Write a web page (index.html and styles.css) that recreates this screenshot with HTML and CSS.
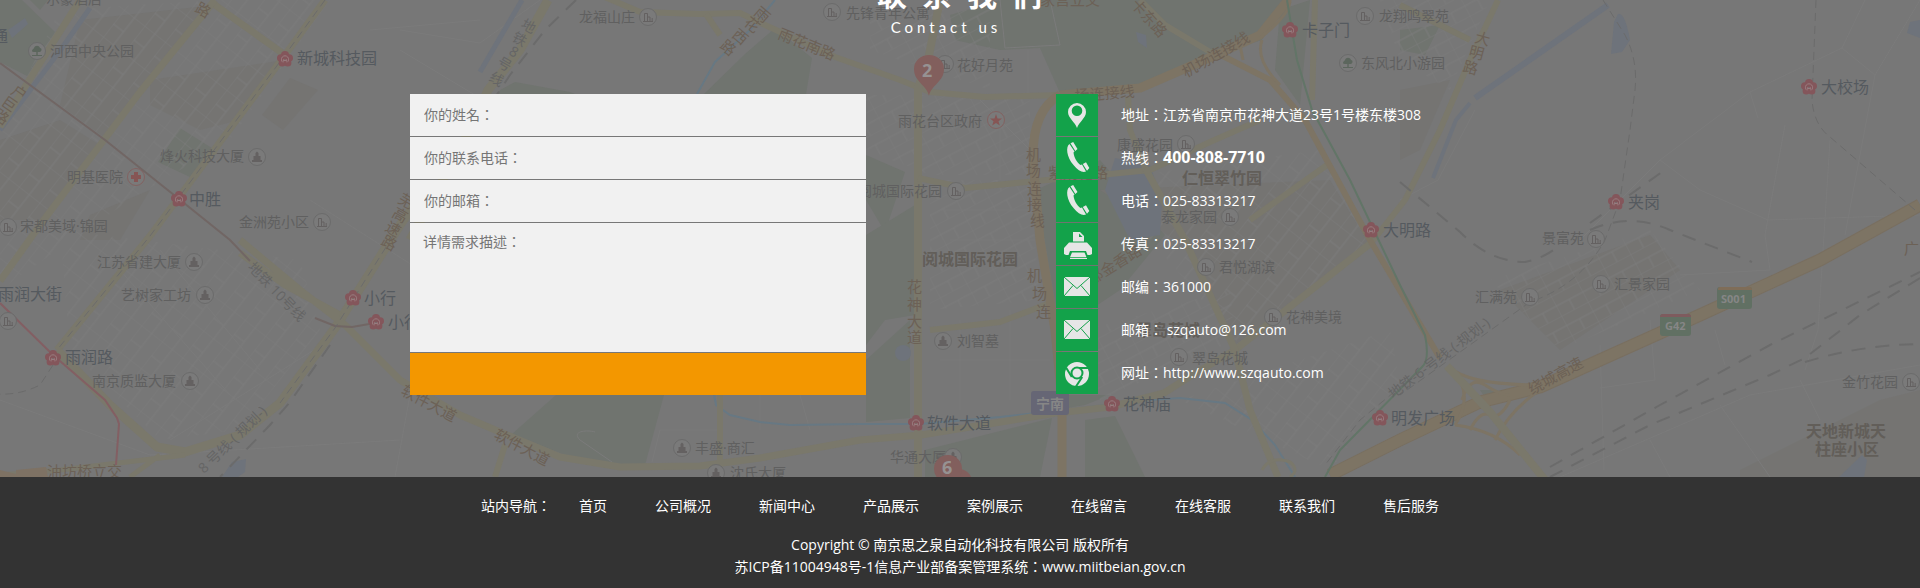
FILE: index.html
```html
<!DOCTYPE html>
<html lang="zh-CN">
<head>
<meta charset="utf-8">
<meta name="viewport" content="width=device-width, initial-scale=1">
<title>联系我们</title>
<link rel="stylesheet" href="styles.css">
</head>
<body>
<section class="contact">
<svg class="map" viewBox="0 0 1920 477" preserveAspectRatio="xMidYMid slice" aria-hidden="true">
  <defs>
    <pattern id="blocks" width="34" height="26" patternUnits="userSpaceOnUse" patternTransform="rotate(-52)">
      <path class="lane" d="M0 0H34M0 0V26M17 0V13M0 13H34"/>
    </pattern>
    <pattern id="blocks-flat" width="30" height="22" patternUnits="userSpaceOnUse" patternTransform="rotate(-28)">
      <path class="lane" d="M0 0H30M0 0V22M15 11V22M0 11H30"/>
    </pattern>
    <g id="metro">
      <g class="metro-petal"><circle cy="-4" r="4"/><circle cx="4.2" cy="-1" r="3.8"/><circle cx="2.8" cy="4" r="3.6"/><circle cx="-2.8" cy="4" r="3.6"/><circle cx="-4.2" cy="-1" r="3.8"/></g>
      <path class="metro-ring" d="M-2 3.4A3.6 3.6 0 1 1 2 3.4M-1.4 2.6V.6L0 2L1.4 .6V2.6"/>
    </g>
    <g id="poi"><circle class="poi-disc" r="8.5"/><path class="poi-mark" d="M-3.500 4V-3.500H-.5V4M-.5 0H2V4M4.200 1V4M-5 4.500H5"/></g>
    <g id="tower"><circle class="poi-disc" r="8.5"/><path class="poi-fill" d="M-5 5V3H-3.500V-1H-1.500V-4L0-5.500L1.500-4V-1H3.500V3H5V5Z"/></g>
    <g id="tree"><circle class="poi-disc" r="8.5"/><path class="poi-tree" d="M-5 0C-5-2-3-2-3-3C-2-6 2-6 3-3C5-3 5 0 3 1H.7V4H5V5H-5V4H-.7V1H-3C-5 1-5 0-5 0Z"/></g>
  </defs>

  <g class="park">
    <path d="M0 0H22L55 32L27 76L0 62Z"/><path d="M30 0H48L40 10Z"/>
    <path d="M180 128L215 150L192 178L158 162Z"/>
    <path d="M500 90L515 82L570 92L590 100H495Z"/>
    <path d="M745 54L775 28L812 58L806 94H704Z"/>
    <path d="M950 15L1000 0H1285L1262 40L1200 60L1140 84L1060 93L1040 48L1000 50L955 40Z"/>
    <path d="M1280 10L1310 0L1300 105L1275 70Z"/>
    <path d="M866 155L905 172L885 232L866 200Z"/>
    <path d="M866 235L915 205V315L885 320L866 345Z"/>
    <path d="M866 360L910 320V418L866 422Z"/>
    <path d="M556 395H664L645 465H590L512 434Z"/>
    <path d="M1036 190L1100 160L1165 235L1120 290L1060 330Z"/>
    <path d="M1056 395H1110L1085 405L1056 410Z"/><path d="M925 450L1052 418L1040 477H925Z"/>
    <path d="M1085 420L1115 416L1145 477H1085Z"/>
    <path d="M1400 30L1440 25L1425 55L1400 50Z"/><path d="M1480 390L1498 390L1490 405Z"/>
  </g>
  <g class="built">
    <path d="M80 20L215 5L140 90L105 138L60 105Z"/><path d="M150 80L285 60L240 120L200 130L150 105Z"/>
    <path d="M0 140L60 120L100 145L40 220H0Z"/><path d="M90 215L150 190L120 240H80Z"/>
    <path d="M1100 190L1330 180L1370 245L1235 345L1190 250Z"/><path d="M1500 290L1650 235L1680 270L1560 350Z"/>
    <path d="M1740 470L1880 400L1920 390V477H1740Z"/>
    <path d="M262 115L290 78L318 90L283 130Z"/><path d="M1400 90L1450 80L1420 150L1400 160Z"/>
  </g>
  <g>
    <path fill="url(#blocks)" d="M60 10L215 0L330 0L230 140L130 200L0 290V130Z"/>
    <path fill="url(#blocks)" d="M60 230L300 260L320 330L240 430L160 440L70 350Z"/>
    <path fill="url(#blocks)" d="M1100 180L1320 150L1370 240L1240 345ZM1180 400L1390 330L1400 380L1330 470Z"/>
    <path fill="url(#blocks-flat)" d="M930 180H1030L1040 300L930 310ZM1490 280L1650 230L1700 290L1560 350ZM870 10H990V90L870 50ZM1380 0H1490L1450 90L1400 60Z"/>
    <path fill="url(#blocks-flat)" d="M860 95H1030V175H930L866 150ZM1085 330L1230 290L1235 340L1100 400Z"/>
  </g>
  <g class="lane">
    <path d="M400 30L480 43L540 0M400 50L500 110M310 200L420 270M370 30L480 20M0 400L150 455L400 440M410 395L395 477M170 440L330 340M120 270L230 395M160 250L260 370"/>
    <path d="M1400 200L1438 180L1475 110M1580 240L1660 160L1750 92L1842 48L1875 75L1845 235M1842 48L1865 0M1875 75L1920 0M1750 92L1758 118M1660 160L1700 190L1768 220L1920 215M1785 125L1765 235L1770 270M1830 140L1818 330L1805 370M1600 345L1604 470M1650 320L1655 380L1600 388M1715 330L1725 365M1560 477L1750 395L1920 365M1680 275L1770 270M1800 380L1820 420M1650 440L1670 477M1720 405L1770 477"/>
    <path d="M1000 0L1005 48L1060 45L1050 0M1028 50V97M980 100L1030 150M1000 110V180M940 210H1030M950 240H1035M960 320V410M1010 310V400M940 360H1050M580 440C570 430 590 430 595 432M580 440L612 462M660 430L652 462M660 430H720M760 395V430M800 395L810 430"/>
  </g>
  <g class="water">
    <path d="M1115 158L1150 165L1162 200L1160 235L1130 240L1105 190Z"/>
    <path d="M1618 14Q1625 12 1630 40L1622 52L1611 54L1614 22Z"/><path d="M1910 22L1920 20V38L1907 33Z"/>
    <path d="M1839 477L1862 455L1867 460L1864 477ZM1136 32L1146 35L1147 48L1138 42Z"/>
    <path d="M222 477L232 462L246 459L245 472L238 477ZM8 30L25 18L28 24L12 38Z"/><circle cx="903" cy="353" r="8"/>
  </g>
  <g class="canal">
    <path d="M90 8L62 48L0 130" stroke-width="5"/><path d="M522 0L480 72" stroke-width="5"/>
    <path d="M1608 5L1475 98" stroke-width="6"/><path d="M1470 103L1456 120L1433 178" stroke-width="4"/>
  </g>
  <g class="stream">
    <path d="M775 0L750 30L715 62L697 94M713 390L716 405L730 415L760 422L790 425L860 424L920 424L1000 417L1150 400L1180 398L1225 403L1252 420L1275 445L1295 477"/>
  </g>
  <g class="road">
    <path d="M80 0L28 82L0 127M215 0L140 92L40 225L0 281" stroke-width="7"/>
    <path d="M215 5L285 55M325 0L285 55L150 236L57 350" stroke-width="7"/>
    <path d="M57 350L110 405L157 447L185 452L240 435L280 403L335 328L400 225L425 190" stroke-width="9"/>
    <path d="M240 253L285 285L340 315M240 240L300 290L345 325L400 380L460 415L500 432L560 457L620 467L700 466L760 458L860 440L921 435L1056 413L1110 407L1164 393L1189 377L1235 350L1371 243" stroke-width="7"/>
    <path d="M0 475L60 470L185 455M130 477L160 455" stroke-width="5"/>
    <path d="M548 0L520 50L488 90L470 130L410 240" stroke-width="9"/>
    <path d="M600 -5L640 12L700 14L740 13L765 25L835 57L900 80L930 92L985 97L1060 95" stroke-width="6"/>
    <path d="M706 14L720 35M720 390V460M505 445L495 477" stroke-width="6"/>
    <path d="M940 0L928 60L918 88V477" stroke-width="8"/>
    <path d="M918 178L965 188L1110 174L1150 170L1210 142L1260 120M1128 97L1130 130L1145 168M930 330L1000 322L1050 303M1250 220L1327 165" stroke-width="6"/>
    <path d="M1145 168L1185 240L1235 350L1250 410L1278 477" stroke-width="7"/>
    <path d="M1140 0L1165 25L1215 55M1400 5L1470 40M1498 0L1470 60L1440 130L1405 200L1371 243M1315 0L1312 100" stroke-width="6"/>
    <path d="M1262 470Q1270 455 1290 462Q1300 470 1290 477" stroke-width="3"/>
  </g>
  <g class="highway-edge"><path d="M1920 205L1820 260L1700 315L1600 360L1540 387L1480 402L1400 440L1330 475" stroke-width="13"/></g>
  <g class="highway">
    <path d="M1920 205L1820 260L1700 315L1600 360L1540 387L1480 402L1400 440L1330 475" stroke-width="11"/>
    <path d="M1060 95L1140 88L1200 62L1260 35L1288 0" stroke-width="9"/>
    <path d="M1060 95Q1032 110 1033 160L1040 240L1055 330L1062 400V477" stroke-width="9"/>
    <path d="M1215 52L1270 80L1305 120L1370 240L1440 358" stroke-width="6"/>
    <path d="M1260 38Q1290 15 1290 0M1262 40Q1255 60 1280 85M1240 45L1243 60" stroke-width="3"/>
    <path d="M1450 368Q1470 385 1540 385M1452 368Q1475 395 1455 425M1455 425Q1495 430 1520 455M1495 440Q1510 410 1540 390M1462 400Q1470 375 1485 385T1510 395M1470 430Q1480 410 1490 415T1510 400" stroke-width="3"/>
  </g>
  <g class="road"><path d="M1447 366L1490 412L1545 480" stroke-width="8"/></g>
  <g class="orange-block"><path d="M0 470L16 474V477H0ZM16 470L46 467L48 477H16Z"/></g>
  <g class="line">
    <path class="line-brown" d="M0 63L105 140L179 199L230 240L250 261M315 318L335 326L352 327L375 323"/>
    <path class="line-red" d="M0 303L53 355L105 400L117 418L119 424L116 465"/>
    <path class="line-green" d="M1287 0L1297 60L1312 110L1350 180L1400 285L1425 335Q1430 360 1422 367L1340 450L1325 477"/>
    <path class="dash" d="M325 0L285 55L150 236L57 350M400 225L335 328L280 403"/>
    <path class="dash" d="M53 365L40 385Q20 395 0 394M1415 375L1360 420L1325 465"/>
    <path class="dash dash-wide" d="M576 0L545 30L510 75L490 105M330 345L290 402L270 425L220 477"/>
    <path class="dash" d="M1603 0L1625 35Q1638 60 1635 90L1630 130L1620 200L1605 240Q1580 285 1530 302L1400 395"/>
    <path class="dash" d="M1816 0L1812 100Q1814 125 1830 137L1915 210"/>
    <path class="dash dash-wide" d="M1400 182L1460 232Q1490 262 1525 262Q1545 258 1560 245M1590 223L1662 172M1590 230Q1630 212 1670 230L1752 262"/>
    <path class="dash dash-wide" d="M1550 467L1660 405L1770 345L1920 272M1550 477L1650 425L1770 375L1805 358L1860 315L1920 278M1805 362Q1860 345 1920 344"/>
  </g>

  <g class="poi-label">
    <text x="46" y="4">尔豪酒店</text><text x="50" y="56">河西中央公园</text><text x="160" y="161">烽火科技大厦</text>
    <text x="67" y="182">明基医院</text><text x="20" y="231">宋都美域·锦园</text><text x="239" y="227">金洲苑小区</text>
    <text x="97" y="267">江苏省建大厦</text><text x="121" y="300">艺树家工坊</text><text x="92" y="386">南京质监大厦</text>
    <text x="579" y="22">龙福山庄</text><text x="846" y="18">先锋青年公寓</text><text x="957" y="70">花好月苑</text>
    <text x="898" y="126">雨花台区政府</text><text x="858" y="196">阅城国际花园</text><text x="1117" y="150">康盛花园</text>
    <text x="1161" y="222">泰龙家园</text><text x="1219" y="272">君悦湖滨</text><text x="1286" y="322">花神美境</text>
    <text x="957" y="346">刘智墓</text><text x="1192" y="363">翠岛花城</text><text x="890" y="462">华通大厦</text>
    <text x="695" y="453">丰盛·商汇</text><text x="730" y="478">沈氏大厦</text><text x="1361" y="68">东风北小游园</text>
    <text x="1379" y="21">龙翔鸣翠苑</text><text x="1542" y="243">景富苑</text><text x="1614" y="289">汇景家园</text>
    <text x="1475" y="302">汇满苑</text><text x="1842" y="387">金竹花园</text>
  </g>
  <g class="metro-label">
    <text x="-8" y="42">通</text><text x="297" y="64">新城科技园</text><text x="189" y="205">中胜</text>
    <text x="-2" y="300">雨润大街</text><text x="364" y="304">小行</text><text x="388" y="328">小行</text>
    <text x="65" y="363">雨润路</text><text x="1123" y="410">花神庙</text><text x="927" y="429">软件大道</text>
    <text x="1302" y="36">卡子门</text><text x="1821" y="93">大校场</text><text x="1628" y="208">夹岗</text>
    <text x="1383" y="236">大明路</text><text x="1391" y="424">明发广场</text>
  </g>
  <g class="area-label">
    <text x="1182" y="184">仁恒翠竹园</text><text x="922" y="265">阅城国际花园</text><text x="1136" y="336">翠岛花城</text>
    <text x="1806" y="437">天地新城天</text><text x="1815" y="455">柱座小区</text>
  </g>
  <g class="road-label">
    <text x="47" y="477">油坊桥立交</text><text x="1040" y="5">家营立交</text><text x="1048" y="178">紫荆花路</text>
    <text x="194" y="11" rotate="30">路</text>
    <text x="10 0 -8" y="93 104 117" rotate="35">户巨路</text>
    <text x="753 743 731 719" y="14 24 36 47" rotate="40">雨花西路</text>
    <text transform="translate(777 38) rotate(22)">雨花南路</text>
    <text transform="translate(1186 78) rotate(-30)">机场连接线</text>
    <text transform="translate(1075 101) rotate(-4)">场连接线</text>
    <text transform="translate(1130 5) rotate(48)">卡东路</text>
    <text transform="translate(1092 285) rotate(-32)">郁金香路</text>
    <text transform="translate(400 394) rotate(28)">软件大道</text>
    <text transform="translate(493 438) rotate(28)">软件大道</text>
    <text transform="translate(1532 395) rotate(-29)">绕城高速</text>
    <text x="397 391 384 380" y="202 216 230 244" rotate="30">芜高速路</text>
    <text x="1026 1026 1027 1027 1030" y="160 176 194 210 226">机场连接线</text>
    <text x="1027 1032 1036" y="281 299 317">机场连</text>
    <text x="907 907 907 907" y="292 310 327 343">花神大道</text>
    <text x="1474 1468 1462" y="42 56 71" rotate="15">大明路</text>
    <text x="1904" y="254">广</text>
  </g>
  <g class="rail-label">
    <text transform="translate(247 268) rotate(46)">地铁 10号线</text>
    <text transform="translate(204 474) rotate(-44)">8 号线-( 规划-)</text>
    <text x="520 511 508 496 488" y="27 40 54 65 80" rotate="30">地铁8号线</text>
    <text transform="translate(1393 399) rotate(-37)">地铁-6-号线-(-规划-)</text>
  </g>
  <g>
    <rect class="badge-town" x="1031" y="391" width="38" height="24" rx="3"/><text class="badge-text" x="1036" y="409">宁南</text>
    <rect class="badge-road" x="1717" y="287" width="35" height="22" rx="3"/><path class="badge-orange" d="M1718 290V289Q1718 287 1720 287H1750Q1752 287 1752 290Z"/><text class="badge-text badge-small" x="1721" y="303">S001</text>
    <rect class="badge-road" x="1660" y="314" width="31" height="22" rx="3"/><path class="badge-red" d="M1660 317Q1660 314 1663 314H1688Q1691 314 1691 317Z"/><text class="badge-text badge-small" x="1665" y="330">G42</text>
  </g>
  <g>
    <use href="#metro" x="285" y="59"/><use href="#metro" x="179" y="199"/><use href="#metro" x="353" y="298"/><use href="#metro" x="376" y="322"/>
    <use href="#metro" x="53" y="358"/><use href="#metro" x="1112" y="404"/><use href="#metro" x="916" y="423"/><use href="#metro" x="1290" y="30"/>
    <use href="#metro" x="1809" y="87"/><use href="#metro" x="1616" y="202"/><use href="#metro" x="1371" y="230"/><use href="#metro" x="1380" y="418"/>
    <use href="#tree" x="37" y="51"/><use href="#tree" x="1348" y="63"/>
    <use href="#tower" x="257" y="157"/><use href="#tower" x="194" y="262"/><use href="#tower" x="205" y="295"/><use href="#tower" x="190" y="381"/>
    <use href="#tower" x="682" y="448"/><use href="#tower" x="716" y="473"/><use href="#tower" x="953" y="457"/><use href="#tower" x="943" y="341"/>
    <use href="#poi" x="8" y="227"/><use href="#poi" x="322" y="222"/><use href="#poi" x="8" y="321"/><use href="#poi" x="648" y="17"/>
    <use href="#poi" x="832" y="12"/><use href="#poi" x="956" y="191"/><use href="#poi" x="1186" y="144"/><use href="#poi" x="1230" y="217"/>
    <use href="#poi" x="1206" y="267"/><use href="#poi" x="1273" y="317"/><use href="#poi" x="1179" y="357"/><use href="#poi" x="1365" y="16"/>
    <use href="#poi" x="1596" y="239"/><use href="#poi" x="1601" y="284"/><use href="#poi" x="1530" y="297"/><use href="#poi" x="1911" y="382"/>
    <use href="#poi" x="945" y="64"/>
    <circle class="red-disc" cx="136" cy="177" r="8.500"/><path class="red-mark" d="M134 172H138V175H141V179H138V182H134V179H131V175H134Z"/>
    <circle class="red-disc" cx="996" cy="120" r="8.500"/><path class="red-mark" d="M996 114L997.500 118.500H1002L998.500 121.200L999.800 125.500L996 122.900L992.200 125.500L993.500 121.200L990 118.500H994.500Z"/>
  </g>
  <g class="marker">
    <path d="M929 96C927 85 914 82 914 69A15 14 0 0 1 944 69C944 82 931 85 929 96Z"/>
    <circle cx="959" cy="482" r="13"/><circle cx="948" cy="469" r="14"/>
    <text x="922" y="77">2</text><text x="942" y="474">6</text>
  </g>
</svg>

<div class="contact-inner">
  <header class="heading">
    <h2>联系我们</h2>
    <p>Contact us</p>
  </header>
  <div class="columns">
    <form class="form">
      <input class="field" lang="zh-Hant" type="text" name="name" placeholder="你的姓名：" aria-label="你的姓名">
      <input class="field" lang="zh-Hant" type="tel" name="phone" placeholder="你的联系电话：" aria-label="你的联系电话">
      <input class="field" lang="zh-Hant" type="email" name="email" placeholder="你的邮箱：" aria-label="你的邮箱">
      <textarea class="field field-area" lang="zh-Hant" name="message" placeholder="详情需求描述：" aria-label="详情需求描述"></textarea>
      <button class="submit" type="submit" aria-label="提交"></button>
    </form>
    <ul class="details">
      <li><svg class="icon" viewBox="0 0 42 42" aria-hidden="true"><path fill-rule="evenodd" d="M21 34C19 28 12 24 12 18A9 9 0 0 1 30 18C30 24 23 28 21 34ZM21 11.500A5.300 5.300 0 1 0 21 22.100A5.300 5.300 0 1 0 21 11.500Z"/></svg>
        <span>地址<span class="colon" lang="zh-Hant">：</span>江苏省南京市花神大道23号1号楼东楼308</span></li>
      <li><svg class="icon" viewBox="0 0 42 42" aria-hidden="true"><path d="M13.500 7C9.500 9.500 10.500 20 17.500 28C22 33.500 26.500 36 30 34.500L26 27.500L24.500 28C21 25.500 18 20.500 17.500 15.500L18.500 14.500ZM14.500 6.300L17.200 5L21.500 12L19.300 14ZM26.800 27L30 25.200L33.300 31L31 33.800Z"/></svg>
        <span>热线<span class="colon" lang="zh-Hant">：</span><strong>400-808-7710</strong></span></li>
      <li><svg class="icon" viewBox="0 0 42 42" aria-hidden="true"><path d="M13.500 7C9.500 9.500 10.500 20 17.500 28C22 33.500 26.500 36 30 34.500L26 27.500L24.500 28C21 25.500 18 20.500 17.500 15.500L18.500 14.500ZM14.500 6.300L17.200 5L21.500 12L19.300 14ZM26.800 27L30 25.200L33.300 31L31 33.800Z"/></svg>
        <span>电话<span class="colon" lang="zh-Hant">：</span>025-83313217</span></li>
      <li><svg class="icon" viewBox="0 0 42 42" aria-hidden="true"><path fill-rule="evenodd" d="M17 9H24L28 13V18.500H17ZM23 10.500V14H26.500ZM13 19.500H31L36 25V31L34 32H31.500L30 28H14L12.500 32H10L8 31V25ZM16 29.500H28.500L30.500 34.200H14ZM14 35H31V36H14Z"/></svg>
        <span>传真<span class="colon" lang="zh-Hant">：</span>025-83313217</span></li>
      <li><svg class="icon" viewBox="0 0 42 42" aria-hidden="true"><path d="M8 11H34V30H8Z"/><path class="icon-line" d="M8 11L21 22.500L34 11M8 30L17 19.500M34 30L25 19.500"/></svg>
        <span>邮编<span class="colon" lang="zh-Hant">：</span>361000</span></li>
      <li><svg class="icon" viewBox="0 0 42 42" aria-hidden="true"><path d="M8 11H34V30H8Z"/><path class="icon-line" d="M8 11L21 22.500L34 11M8 30L17 19.500M34 30L25 19.500"/></svg>
        <span>邮箱<span class="colon" lang="zh-Hant">：</span> szqauto@126.com</span></li>
      <li><svg class="icon" viewBox="0 0 42 42" aria-hidden="true"><circle cx="21" cy="22" r="12"/><path class="icon-ring" d="M21 16H33M15.800 25L10 15.500M26.200 25L20 34.500"/><circle class="icon-hub" cx="21" cy="21" r="5.500"/></svg>
        <span>网址<span class="colon" lang="zh-Hant">：</span>http://www.szqauto.com</span></li>
    </ul>
  </div>
</div>
</section>

<footer class="footer">
  <nav class="nav" aria-label="站内导航">
    <span class="nav-title">站内导航<span class="colon" lang="zh-Hant">：</span></span>
    <ul class="nav-list">
      <li><a href="#">首页</a></li>
      <li><a href="#">公司概况</a></li>
      <li><a href="#">新闻中心</a></li>
      <li><a href="#">产品展示</a></li>
      <li><a href="#">案例展示</a></li>
      <li><a href="#">在线留言</a></li>
      <li><a href="#">在线客服</a></li>
      <li><a href="#">联系我们</a></li>
      <li><a href="#">售后服务</a></li>
    </ul>
  </nav>
  <p>Copyright © 南京思之泉自动化科技有限公司 版权所有</p>
  <p>苏ICP备11004948号-1信息产业部备案管理系统<span class="colon" lang="zh-Hant">：</span>www.miitbeian.gov.cn</p>
</footer>
</body>
</html>
```
FILE: styles.css
```css
* {
  box-sizing: border-box;
}

body {
  margin: 0;
  background: #333;
  color: #fff;
  font: 14px/22px "Open Sans", "Noto Sans CJK SC", sans-serif;
}

h2,
p,
ul {
  margin: 0;
  padding: 0;
}

ul {
  list-style: none;
}

.colon {
  font-family: "Noto Sans CJK TC", sans-serif;
  line-height: 1;
}

/* Contact section */
.contact {
  position: relative;
  overflow: hidden;
  background: #777;
}

.map {
  position: absolute;
  inset: 0;
  width: 100%;
  height: 100%;
}

.contact-inner {
  position: relative;
  max-width: 1100px;
  margin: 0 auto;
  padding-bottom: 82px;
}

.heading {
  margin-top: -25px;
  padding-bottom: 55px;
  text-align: center;
}

.heading h2 {
  padding-left: 14px;
  font-size: 30px;
  line-height: 40px;
  letter-spacing: 15px;
}

.heading p {
  padding-right: 28px;
  font-family: Lato, sans-serif;
  font-size: 15px;
  line-height: 24px;
  letter-spacing: 4px;
}

.columns {
  display: flex;
  align-items: flex-start;
  gap: 190px;
}

.form {
  display: flex;
  flex: 0 1 456px;
  flex-direction: column;
  gap: 1px;
  min-width: 0;
}

.field {
  width: 100%;
  height: 42px;
  padding: 0 14px 2px;
  border: 0;
  border-radius: 0;
  background: #f1f1f1;
  color: #333;
  font: 14px/20px "Open Sans", "Noto Sans CJK TC", sans-serif;
}

.field::placeholder {
  color: #757575;
}

.field-area {
  display: block;
  height: 129px;
  padding: 9px 13px;
  resize: none;
}

.submit {
  height: 42px;
  border: 0;
  background: #f39700;
  cursor: pointer;
}

.details {
  display: grid;
  gap: 1px;
}

.details li {
  display: flex;
  align-items: center;
  gap: 23px;
}

.details strong {
  font-size: 16px;
  line-height: 20px;
}

.icon {
  flex: none;
  width: 42px;
  height: 42px;
  background: #13a24a;
  fill: #e6e6e6;
}

.icon-line,
.icon-ring {
  fill: none;
  stroke: #13a24a;
}

.icon-ring {
  stroke-width: 2;
}

.icon-hub {
  stroke: #13a24a;
  stroke-width: 2;
}

/* Map artwork */
.park {
  fill: #70746f;
}

.built {
  fill: #757472;
}

.lane {
  fill: none;
  stroke: #7b7b7b;
}

.water {
  fill: #6e737b;
}

.canal {
  fill: none;
  stroke: #6e737b;
}

.stream {
  fill: none;
  stroke: #677883;
  stroke-width: 2;
}

.road,
.highway,
.highway-edge {
  fill: none;
  stroke-linejoin: round;
}

.road {
  stroke: #7a786b;
}

.highway {
  stroke: #7d7464;
}

.highway-edge {
  stroke: #796f60;
}

.orange-block {
  fill: #7e7264;
}

.line path {
  fill: none;
  stroke-width: 2;
}

.line .line-brown {
  stroke: #716664;
}

.line .line-red {
  stroke: #835f63;
}

.line .line-green {
  stroke: #627567;
}

.line .dash {
  stroke: #6b6b6b;
  stroke-width: 1;
  stroke-dasharray: 8 5;
}

.line .dash-wide {
  stroke-width: 2;
  stroke-dasharray: 14 10;
}

.marker {
  fill: #825f5d;
}

.marker text {
  fill: #969292;
  font: bold 18px "Open Sans", sans-serif;
}

.poi-label,
.metro-label,
.area-label,
.road-label,
.rail-label {
  fill: #606060;
  font-family: "Open Sans", "Noto Sans CJK SC", sans-serif;
  font-size: 14px;
}

.metro-label {
  fill: #555a5f;
  font-size: 16px;
}

.area-label {
  fill: #625e59;
  font-size: 16px;
  font-weight: bold;
}

.road-label {
  fill: #6c6156;
  font-size: 15px;
}

.rail-label {
  fill: #656565;
}

.metro-petal {
  fill: #84565b;
}

.metro-ring {
  fill: none;
  stroke: #997d80;
}

.poi-disc {
  fill: #7a7a7a;
  stroke: #6b6b6b;
}

.poi-mark {
  fill: none;
  stroke: #646161;
}

.poi-fill {
  fill: #646161;
}

.poi-tree {
  fill: #5c665d;
}

.red-disc {
  fill: #7a7a7a;
  stroke: #826261;
}

.red-mark {
  fill: #865655;
}

.badge-town {
  fill: #666675;
}

.badge-road {
  fill: #617063;
}

.badge-orange {
  fill: #7f6d58;
}

.badge-red {
  fill: #7e5b5e;
}

.badge-text {
  fill: #868686;
  font: bold 14px "Open Sans", "Noto Sans CJK SC", sans-serif;
}

.badge-small {
  font-size: 11px;
}

/* Footer */
.footer {
  padding: 18px 0 10px;
  text-align: center;
}

.nav {
  display: flex;
  flex-wrap: wrap;
  justify-content: center;
  gap: 28px;
  padding-bottom: 17px;
}

.nav-list {
  display: flex;
  flex-wrap: wrap;
  gap: 0 48px;
}

.nav a {
  color: inherit;
  text-decoration: none;
}
```
